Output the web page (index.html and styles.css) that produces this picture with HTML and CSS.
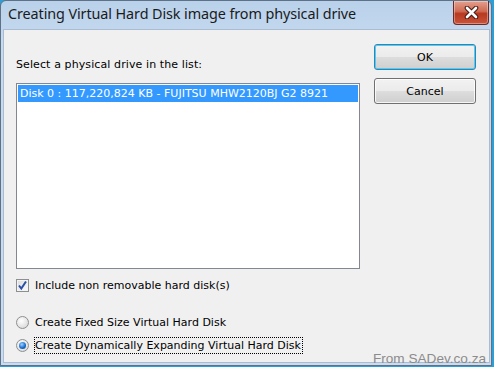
FILE: index.html
```html
<!DOCTYPE html>
<html lang="en">
<head>
    <meta charset="UTF-8">
    <title>Creating Virtual Hard Disk image from physical drive</title>
    <link rel="stylesheet" href="styles.css">
</head>
<body>
    <div class="window">
        <div class="titlebar">
            <span class="title">Creating Virtual Hard Disk image from physical drive</span>
            <button class="close-btn" aria-label="Close">
                <svg width="17" height="13" viewBox="0 0 17 13">
                    <path d="M4 2 L13 11 M13 2 L4 11" stroke="#4a1a14" stroke-width="4.6" stroke-linecap="round"/>
                    <path d="M4 2 L13 11 M13 2 L4 11" stroke="#ffffff" stroke-width="2.6" stroke-linecap="round"/>
                </svg>
            </button>
        </div>

        <div class="client">
            <div class="main-col">
                <div class="prompt">Select a physical drive in the list:</div>
                <div class="listbox">
                    <div class="list-item selected">Disk 0 : 117,220,824 KB - FUJITSU MHW2120BJ G2 8921</div>
                </div>

                <label class="option check-row">
                    <span class="checkbox">
                        <svg width="11" height="11" viewBox="0 0 11 11">
                            <path d="M2 5.5 L4.3 8.5 L9 1.5" fill="none" stroke="#2a4fa8" stroke-width="2"/>
                        </svg>
                    </span>
                    <span class="option-label">Include non removable hard disk(s)</span>
                </label>

                <div class="radio-group">
                    <label class="option">
                        <span class="radio"></span>
                        <span class="option-label">Create Fixed Size Virtual Hard Disk</span>
                    </label>
                    <label class="option">
                        <span class="radio checked"></span>
                        <span class="option-label focused">Create Dynamically Expanding Virtual Hard Disk</span>
                    </label>
                </div>
            </div>

            <div class="side-col">
                <button class="btn btn-default">OK</button>
                <button class="btn">Cancel</button>
            </div>

            <div class="credit">From SADev.co.za</div>
        </div>
    </div>
</body>
</html>
```

FILE: styles.css
```css
body {
    margin: 0;
    padding: 0;
    width: 494px;
    height: 367px;
    overflow: hidden;
    background: #2b9fd6;
    font-family: Tahoma, "DejaVu Sans", sans-serif;
    font-size: 11px;
    color: #000;
}

.window {
    width: 492px;
    height: 366px;
    box-sizing: border-box;
    border: 1px solid #5f7184;
    border-radius: 6px 6px 0 0;
    background: linear-gradient(to bottom, #b9d1ea, #c6daf0 40px, #c9dcf1);
    display: flex;
    flex-direction: column;
}

.titlebar {
    height: 28px;
    display: flex;
    align-items: flex-start;
    justify-content: space-between;
    padding-left: 7px;
}

.title {
    font-family: "Noto Sans", "Open Sans", sans-serif;
    font-size: 14.4px;
    color: #1b1b1b;
    margin-top: 3px;
    letter-spacing: -0.1px;
}

.close-btn {
    width: 36px;
    height: 24px;
    margin-right: 2px;
    padding: 0;
    border: 1px solid #6b2a23;
    border-top: none;
    border-radius: 0 0 4px 4px;
    background: linear-gradient(to bottom, #e4a08f, #cf6a52 45%, #b8391f 55%, #c9533a);
    display: flex;
    align-items: center;
    justify-content: center;
    box-shadow: inset 0 0 0 1px rgba(255, 255, 255, 0.35);
}

.client {
    position: relative;
    flex: 1;
    margin: 0 1px 2px 2px;
    background: #f0f0f0;
    border: 1px solid #a9bcd2;
    display: flex;
    gap: 14px;
    padding: 0 13px 0 12px;
}

.main-col {
    width: 346px;
    display: flex;
    flex-direction: column;
}

.prompt {
    margin-top: 28px;
    line-height: 14px;
    letter-spacing: 0.1px;
}

.listbox {
    margin-top: 11px;
    height: 182px;
    border: 1px solid #828790;
    background: #fff;
    padding: 1px;
}

.list-item {
    line-height: 17px;
    padding-left: 2px;
    white-space: nowrap;
}

.list-item.selected {
    background: #3399ff;
    color: #fff;
}

.option {
    display: flex;
    align-items: center;
    gap: 5px;
    height: 17px;
}

.check-row {
    margin-top: 8px;
}

.checkbox {
    width: 11px;
    height: 11px;
    border: 1px solid #8e8f8f;
    background: linear-gradient(135deg, #dcdcdc, #fbfbfb);
    box-shadow: inset 0 0 0 1px #f4f4f4;
    display: flex;
    align-items: center;
    justify-content: center;
}

.radio-group {
    margin-top: 20px;
    display: flex;
    flex-direction: column;
    gap: 6px;
}

.radio {
    width: 11px;
    height: 11px;
    border: 1px solid #8e8f8f;
    border-radius: 50%;
    background: radial-gradient(circle at 40% 35%, #ffffff, #e6e6e6 55%, #cfcfcf);
    position: relative;
}

.radio.checked::after {
    content: "";
    position: absolute;
    left: 2px;
    top: 2px;
    width: 7px;
    height: 7px;
    border-radius: 50%;
    background: radial-gradient(circle at 40% 35%, #9fd4ff, #1a6ed0 55%, #0b3f8a);
}

.option-label {
    line-height: 15px;
    padding: 0 1px 0 0;
    border: 1px dotted transparent;
}

.option-label.focused {
    border-color: #000;
}

.side-col {
    display: flex;
    flex-direction: column;
    gap: 8px;
    padding-top: 14px;
}

.btn {
    width: 102px;
    height: 26px;
    font-family: inherit;
    font-size: 11px;
    color: #000;
    border: 1px solid #707070;
    border-radius: 3px;
    background: linear-gradient(to bottom, #f2f2f2, #ebebeb 50%, #dddddd 51%, #cfcfcf);
    box-shadow: inset 0 0 0 1px rgba(255, 255, 255, 0.8);
    padding: 0;
}

.btn-default {
    border-color: #3c7fb1;
    box-shadow: inset 0 0 0 1px #48d0f5;
}

.credit {
    position: absolute;
    right: 3px;
    bottom: -4px;
    font-family: "Liberation Sans", Arial, sans-serif;
    font-size: 13.6px;
    color: #8c8c8c;
}
```
